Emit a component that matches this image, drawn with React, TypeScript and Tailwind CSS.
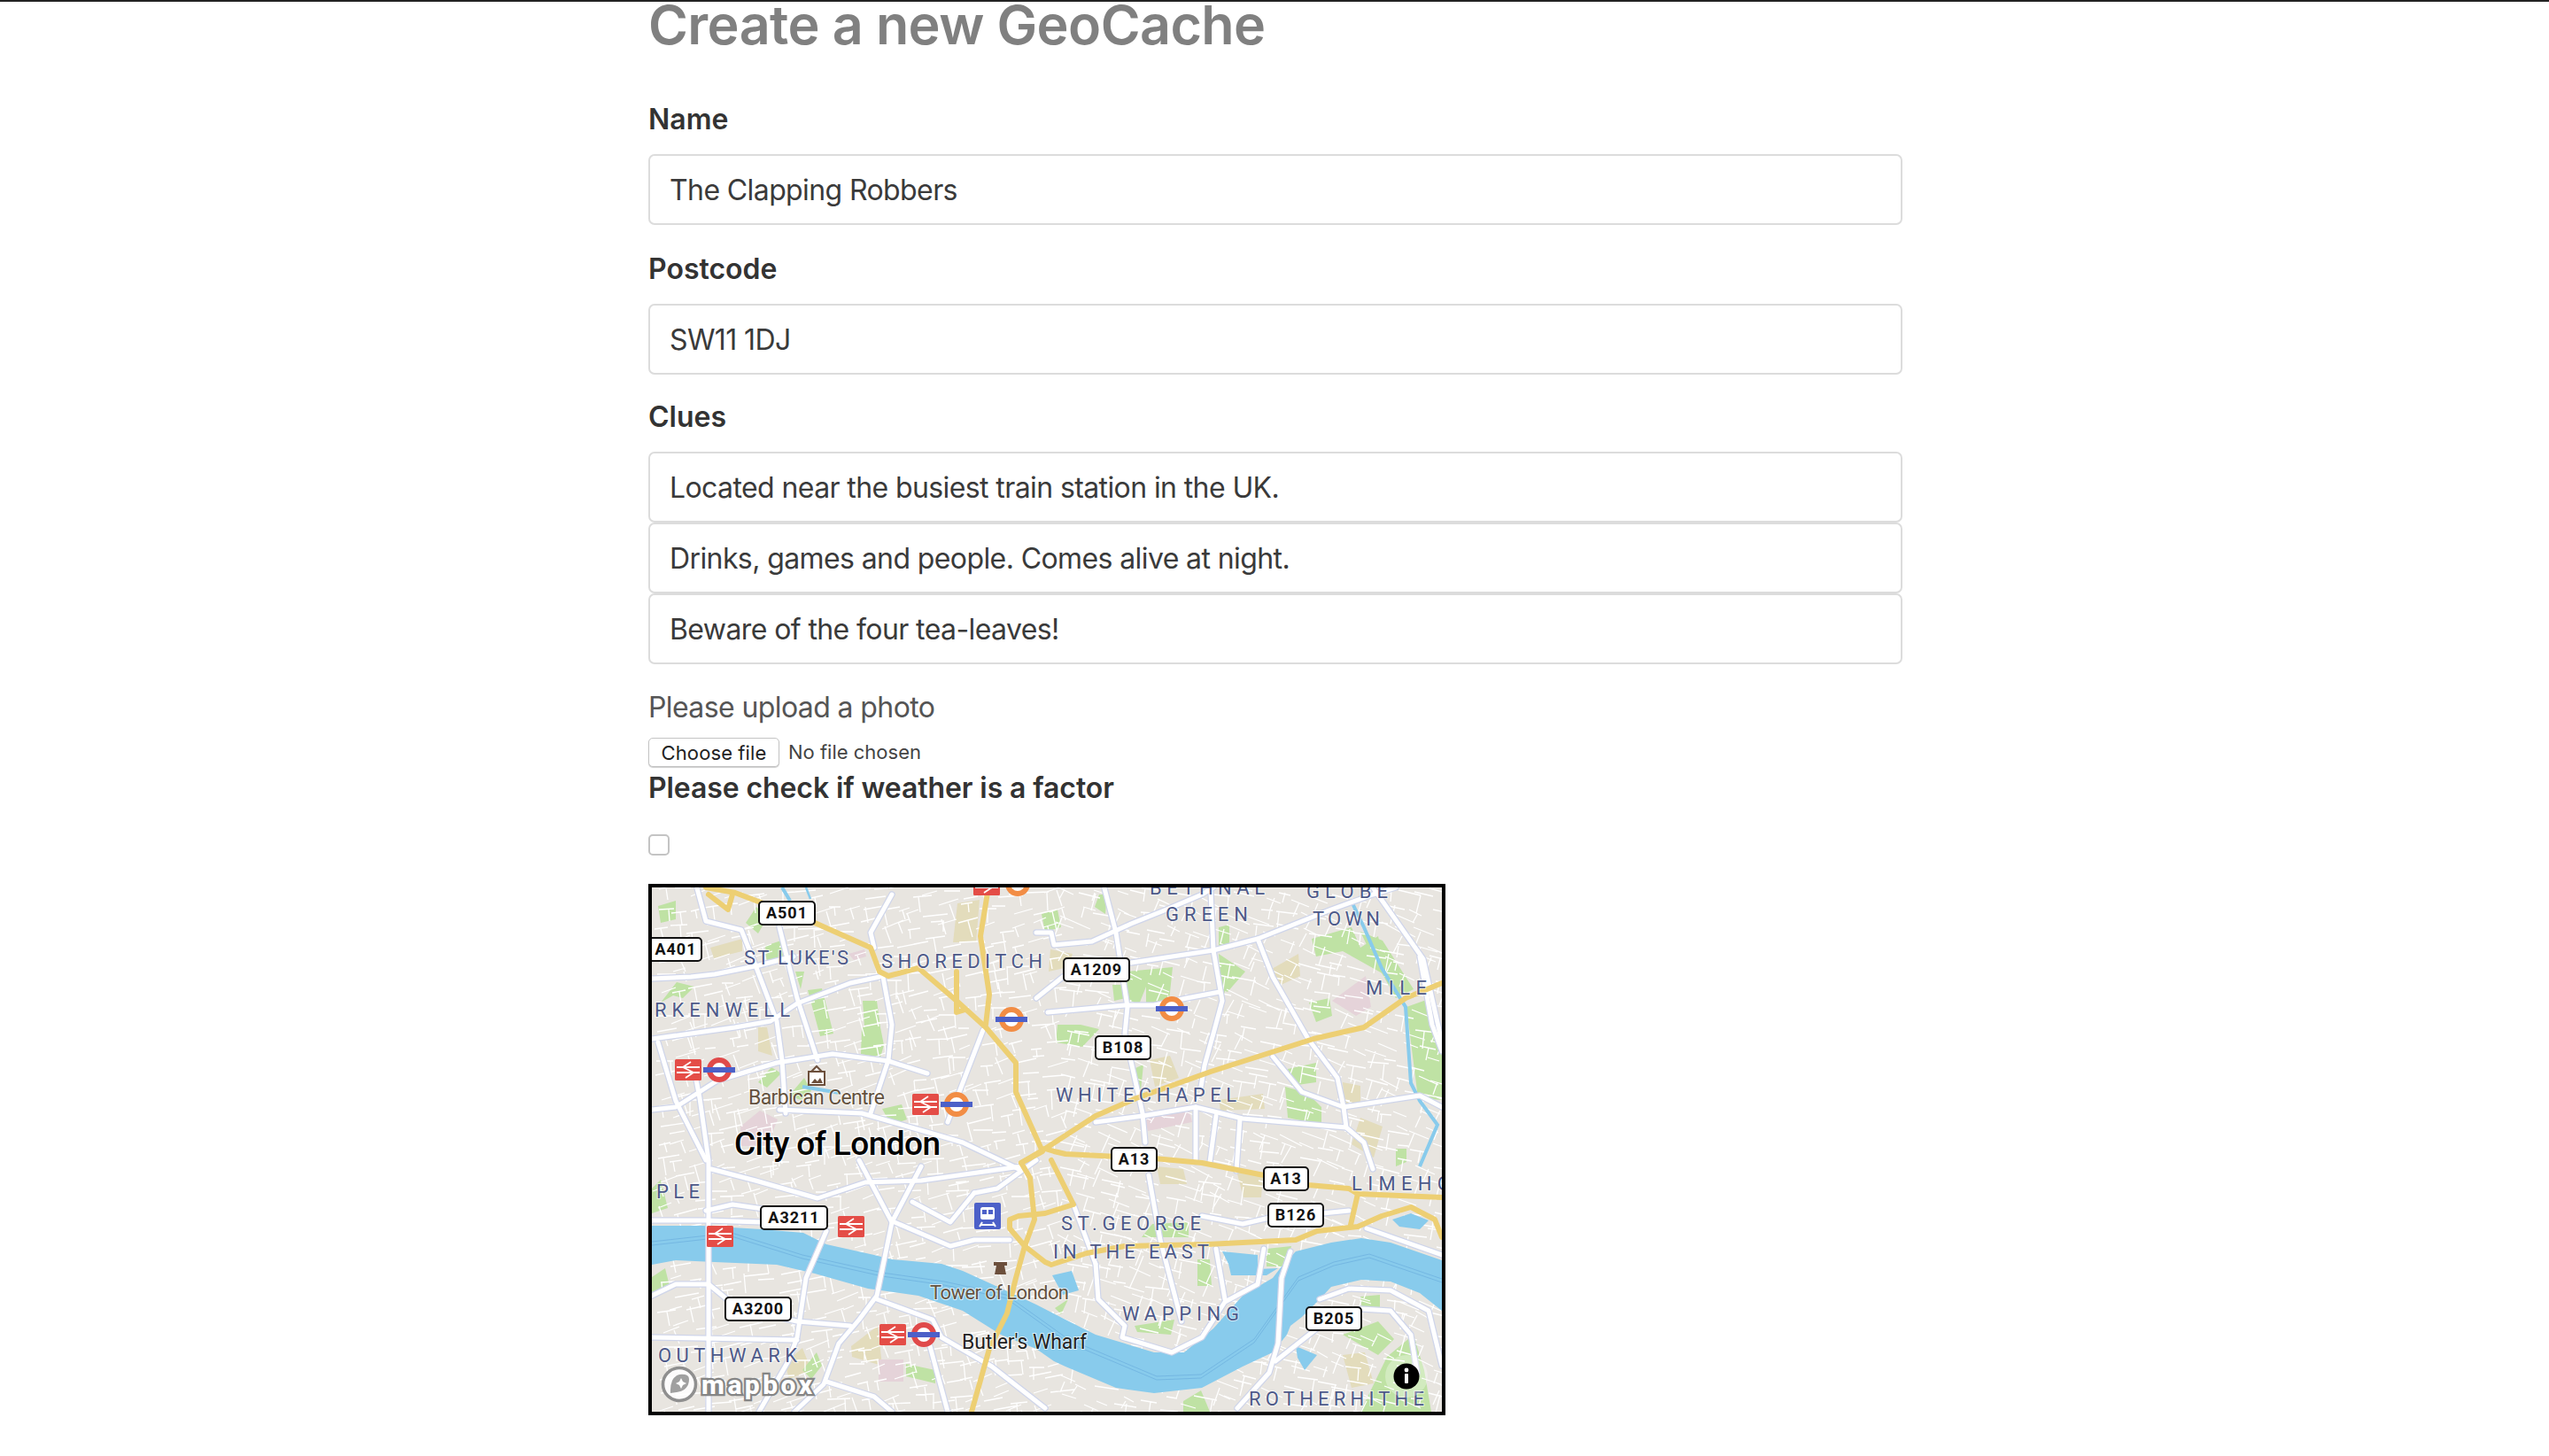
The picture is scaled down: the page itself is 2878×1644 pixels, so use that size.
import React from 'react'

type Pt = [number, number]
const line = (pts: Pt[]) => 'M' + pts.map((p) => p.join(' ')).join(' L')

const YELLOW: Pt[][] = [
  [[61, 0], [94, 6], [184, 40], [247, 68], [257, 95], [267, 100], [301, 91], [344, 128], [377, 158], [411, 198], [411, 231], [441, 298], [417, 311], [427, 328], [432, 375], [421, 405], [411, 441], [401, 481], [381, 521], [361, 592]],
  [[91, 8], [86, 25], [64, 8]],
  [[380, 0], [371, 55], [381, 121], [377, 155]],
  [[344, 95], [344, 141], [354, 138]],
  [[417, 311], [444, 295], [501, 258], [547, 238], [631, 208], [747, 171], [804, 158], [851, 125], [892, 108]],
  [[444, 295], [454, 298], [467, 301], [567, 306], [621, 311], [691, 325], [741, 336], [787, 340], [797, 346], [892, 350]],
  [[451, 308], [476, 358], [444, 368], [414, 371], [404, 375], [404, 385], [421, 405], [444, 423], [451, 426], [491, 413], [534, 405], [627, 403], [727, 398], [751, 388], [797, 383], [824, 371], [857, 361], [884, 375], [892, 395]],
  [[797, 346], [789, 381]],
]

const MAIN: Pt[][] = [
  [[0, 171], [94, 158], [134, 151], [164, 131], [224, 108], [257, 101]],
  [[0, 103], [44, 101], [71, 98], [121, 88], [160, 78]],
  [[51, 1], [61, 38], [101, 48], [117, 88], [141, 151], [147, 195], [151, 255]],
  [[144, 45], [164, 125], [187, 195]],
  [[271, 8], [247, 51], [251, 68]],
  [[261, 101], [271, 155], [267, 195], [247, 255]],
  [[374, 161], [357, 205], [334, 265]],
  [[0, 251], [27, 248], [74, 218], [141, 198], [204, 188], [267, 196], [311, 210]],
  [[144, 251], [237, 255], [317, 278], [351, 288], [414, 318]],
  [[7, 175], [27, 241], [61, 308]],
  [[47, 201], [54, 238], [64, 308], [64, 592]],
  [[0, 376], [61, 376], [124, 378]],
  [[61, 365], [91, 358], [140, 365]],
  [[67, 318], [117, 331], [187, 351], [241, 333], [304, 331], [417, 315]],
  [[234, 308], [271, 378]],
  [[304, 315], [271, 378], [254, 461], [234, 488], [211, 515], [194, 561], [161, 592]],
  [[197, 388], [174, 441], [164, 508], [154, 535], [121, 592]],
  [[274, 378], [337, 405], [364, 398], [404, 398]],
  [[294, 355], [337, 378], [364, 345]],
  [[0, 461], [27, 448], [64, 448], [97, 475], [164, 490], [224, 495]],
  [[0, 508], [164, 511]],
  [[254, 465], [317, 488], [327, 508], [384, 541], [444, 588]],
  [[314, 518], [334, 592]],
  [[197, 558], [251, 575], [271, 592]],
  [[511, 1], [524, 51], [537, 135], [534, 165], [554, 255], [557, 288]],
  [[434, 51], [451, 51], [454, 65], [497, 61], [541, 41], [581, 25], [621, 8], [634, 0]],
  [[541, 85], [634, 71], [684, 58], [767, 25], [814, 8], [840, 0]],
  [[434, 125], [464, 101]],
  [[447, 141], [534, 133], [567, 133], [604, 125], [641, 118]],
  [[631, 5], [634, 71], [644, 128], [634, 165], [624, 201], [620, 225]],
  [[684, 58], [701, 101], [741, 171], [774, 215], [781, 248], [784, 271], [804, 288], [814, 318]],
  [[701, 191], [734, 231], [781, 248], [867, 235], [892, 248]],
  [[501, 265], [554, 258], [614, 248], [667, 261], [784, 271]],
  [[614, 248], [614, 310]],
  [[637, 258], [630, 310]],
  [[664, 261], [660, 320]],
  [[814, 0], [871, 81], [892, 175]],
  [[867, 78], [881, 155], [892, 185]],
  [[754, 465], [787, 453], [834, 455], [877, 478], [892, 540]],
  [[801, 476], [834, 478], [857, 505], [864, 548]],
  [[704, 535], [751, 498]],
  [[721, 411], [711, 441], [707, 515], [697, 548], [661, 588]],
  [[501, 425], [504, 465], [534, 495], [531, 508], [587, 525], [621, 508], [647, 468], [684, 448], [691, 408]],
  [[637, 408], [647, 465]],
  [[561, 325], [574, 398], [598, 490]],
  [[807, 385], [892, 415]],
  [[621, 371], [667, 380], [697, 373]],
  [[757, 368], [787, 365]],
  [[434, 308], [390, 340], [364, 345]],
  [[476, 358], [501, 425]],
]

const RIVER: Pt[] = [[0, 382], [57, 382], [124, 386], [171, 390], [197, 403], [251, 415], [271, 420], [327, 425], [351, 433], [384, 448], [421, 465], [434, 471], [467, 488], [501, 505], [567, 525], [601, 525], [634, 498], [667, 461], [701, 441], [711, 428], [727, 411], [767, 401], [801, 396], [834, 401], [892, 421], [892, 478], [867, 458], [834, 445], [801, 443], [767, 451], [754, 465], [734, 485], [721, 495], [717, 505], [701, 525], [667, 541], [621, 565], [567, 571], [524, 565], [467, 541], [454, 535], [434, 521], [394, 505], [351, 478], [301, 461], [244, 453], [184, 436], [141, 426], [71, 423], [27, 421], [0, 426]]

const DOCKS: Pt[][] = [
  [[836, 375], [857, 368], [877, 376], [867, 386], [844, 383]],
  [[644, 411], [684, 415], [684, 431], [707, 430], [694, 438], [654, 438], [651, 425]],
  [[727, 518], [751, 528], [737, 545], [729, 531]],
  [[452, 438], [474, 433], [482, 455], [464, 460]],
]

const PARKS: Pt[][] = [
  [[7, 21], [27, 15], [27, 36], [10, 40]],
  [[106, 40], [118, 22], [130, 35], [120, 52]],
  [[128, 66], [146, 60], [150, 82], [130, 88]],
  [[10, 130], [28, 107], [48, 112], [35, 125], [24, 122]],
  [[176, 116], [192, 114], [205, 165], [190, 168]],
  [[162, 95], [172, 95], [168, 115]],
  [[238, 128], [254, 128], [258, 158], [240, 158]],
  [[237, 158], [258, 158], [262, 178], [258, 192], [236, 188]],
  [[155, 235], [172, 215], [180, 230], [168, 240]],
  [[260, 250], [282, 245], [288, 262], [270, 268]],
  [[120, 220], [135, 203], [146, 210], [130, 226]],
  [[0, 340], [10, 330], [18, 362], [0, 368]],
  [[0, 440], [15, 430], [20, 450], [0, 462]],
  [[170, 545], [186, 525], [192, 540], [180, 555]],
  [[287, 538], [320, 545], [320, 560], [287, 552]],
  [[505, 8], [514, 8], [512, 30], [500, 22]],
  [[440, 30], [458, 25], [462, 45], [444, 50]],
  [[536, 95], [588, 90], [584, 128], [558, 135], [558, 112], [550, 132], [536, 130]],
  [[640, 75], [670, 95], [650, 118], [643, 115]],
  [[640, 45], [652, 42], [652, 65], [640, 68]],
  [[745, 58], [790, 45], [800, 68], [820, 55], [830, 100], [780, 72], [750, 78]],
  [[800, 50], [825, 60], [860, 115], [840, 125], [812, 75]],
  [[852, 135], [880, 125], [892, 190], [892, 240], [865, 238]],
  [[742, 130], [765, 125], [768, 145], [750, 152]],
  [[484, 155], [505, 160], [486, 180], [456, 175], [458, 155]],
  [[520, 110], [534, 110], [535, 125], [522, 128]],
  [[546, 204], [555, 200], [552, 230], [546, 232]],
  [[718, 205], [750, 198], [750, 220], [722, 224]],
  [[715, 225], [740, 232], [756, 248], [756, 268], [718, 260]],
  [[640, 100], [650, 100], [645, 128]],
  [[840, 295], [852, 295], [852, 310], [840, 315]],
  [[553, 395], [565, 380], [606, 378], [606, 395]],
  [[616, 420], [630, 420], [632, 450], [616, 450]],
  [[694, 408], [722, 405], [716, 428], [694, 428]],
  [[545, 495], [590, 488], [586, 505], [548, 502]],
  [[800, 462], [822, 460], [822, 478], [802, 478]],
  [[780, 505], [820, 490], [838, 510], [820, 528]],
  [[830, 530], [860, 505], [872, 545], [880, 592], [800, 592]],
  [[600, 580], [620, 568], [630, 592], [600, 592]],
  [[455, 475], [470, 465], [462, 482]],
]

const SAND: Pt[][] = [
  [[66, 68], [102, 58], [102, 72], [70, 80]],
  [[345, 18], [370, 14], [366, 62], [340, 62]],
  [[120, 158], [130, 158], [136, 190], [120, 185]],
  [[450, 70], [475, 75], [470, 90], [448, 95]],
  [[700, 92], [730, 75], [732, 100], [706, 112]],
  [[562, 195], [585, 190], [595, 215], [568, 225]],
  [[640, 240], [690, 233], [692, 250], [642, 252]],
  [[570, 315], [600, 318], [604, 335], [574, 335]],
  [[660, 320], [690, 326], [688, 350], [668, 350]],
  [[800, 260], [825, 270], [815, 305], [790, 290]],
  [[780, 220], [800, 224], [800, 245], [782, 248]],
  [[225, 518], [255, 495], [260, 540], [226, 530]],
  [[150, 537], [170, 520], [180, 545], [155, 555]],
  [[780, 528], [805, 525], [815, 560], [790, 565]],
]

const PINK: Pt[][] = [
  [[100, 270], [122, 252], [142, 262], [130, 292], [100, 292]],
  [[222, 75], [240, 70], [242, 78], [228, 82]],
  [[768, 128], [806, 100], [812, 135], [795, 145]],
  [[555, 255], [605, 245], [610, 265], [560, 275]],
  [[256, 533], [284, 533], [284, 558], [256, 558]],
]

// deterministic street grid, so every run draws the same map
const STREETS: string[] = []
let seed = 7
const rnd = () => {
  seed = (seed * 9301 + 49297) % 233280
  return seed / 233280
}
for (let gx = 0; gx < 892; gx += 19) {
  for (let gy = 0; gy < 592; gy += 19) {
    const a = rnd() * 0.4 - 0.2 + (gx > 450 ? 0.3 : -0.2)
    const x = gx + rnd() * 14
    const y = gy + rnd() * 14
    const len = 12 + rnd() * 16
    const c = Math.cos(a) * len
    const s = Math.sin(a) * len
    STREETS.push(`M${x.toFixed(0)} ${y.toFixed(0)} L${(x + c).toFixed(0)} ${(y + s).toFixed(0)}`)
    if (rnd() > 0.35) {
      const mx = x + c * rnd()
      const my = y + s * rnd()
      STREETS.push(`M${mx.toFixed(0)} ${my.toFixed(0)} L${(mx - s * 0.8).toFixed(0)} ${(my + c * 0.8).toFixed(0)}`)
    }
  }
}

const AREAS: [string, number, number, number][] = [
  ["ST LUKE'S", 104, 87, 118],
  ['SHOREDITCH', 259, 91, 182],
  ['RKENWELL', 3, 146, 153],
  ['BETHNAL', 562, 8, 130],
  ['GREEN', 580, 38, 93],
  ['GLOBE', 739, 12, 92],
  ['TOWN', 746, 43, 76],
  ['MILE E', 806, 121, 100],
  ['WHITECHAPEL', 456, 242, 204],
  ['PLE', 5, 351, 49],
  ['OUTHWARK', 7, 536, 157],
  ['ST.GEORGE', 462, 387, 158],
  ['IN THE EAST', 453, 419, 176],
  ['WAPPING', 531, 489, 132],
  ['ROTHERHITHE', 674, 585, 198],
  ['LIMEHO', 790, 342, 112],
]

const SHIELDS: [string, number, number, number][] = [
  ['A501', 121, 16, 63],
  ['A401', -8, 57, 64],
  ['A1209', 465, 80, 74],
  ['B108', 501, 168, 62],
  ['A13', 519, 294, 51],
  ['A13', 691, 316, 50],
  ['B126', 696, 357, 62],
  ['A3211', 123, 360, 75],
  ['A3200', 83, 463, 74],
  ['B205', 739, 474, 62],
]

const RAIL: Pt[] = [[26, 194], [294, 233], [363, -15], [62, 382], [210, 371], [257, 493]]
const TUBE: [number, number, string][] = [
  [76, 206, '#e04a4a'],
  [344, 245, '#f28d45'],
  [413, -4, '#f28d45'],
  [406, 149, '#f28d45'],
  [587, 137, '#f28d45'],
  [307, 505, '#e04a4a'],
]

function LondonMap() {
  const mapFont = { fontFamily: 'Roboto, sans-serif' }
  return (
    <svg viewBox="0 0 892 592" className="block h-full w-full" style={mapFont}>
      <rect width="892" height="592" fill="#e8e5e0" />
      {SAND.map((p, i) => <path key={i} d={line(p) + 'Z'} fill="#e3dcbc" />)}
      {PINK.map((p, i) => <path key={i} d={line(p) + 'Z'} fill="#e5d3d9" />)}
      {PARKS.map((p, i) => <path key={i} d={line(p) + 'Z'} fill="#bfe2a4" />)}
      <path d={STREETS.join(' ')} stroke="#ffffff" strokeWidth="1.3" fill="none" />

      {/* water */}
      <path d={line(RIVER) + 'Z'} fill="#88cbec" />
      {DOCKS.map((p, i) => <path key={i} d={line(p) + 'Z'} fill="#88cbec" />)}
      <g fill="none" stroke="#88cbec" strokeWidth="4">
        <path d="M791 18 L804 45 L824 91 L851 135 L857 221 L867 241 L887 268 L867 315" />
        <path d="M147 0 L156 15" />
        <path d="M174 0 L179 13" strokeWidth="2.5" />
        <path d="M170 225 L212 232" />
      </g>
      <g fill="none" stroke="#74b7e2" strokeWidth="1">
        <path d="M0 400 L90 390 L170 415 L260 435 L330 445 L400 460 L470 510 L570 552 L620 550 L680 510 L730 440 L770 423 L810 414 L892 442" />
        <path d="M0 404 L90 394 L170 419 L260 439 L330 449 L400 464 L470 514 L570 556 L620 554 L680 514 L730 444 L770 427 L810 418 L892 446" />
      </g>

      {/* roads */}
      <g fill="none" strokeLinejoin="round" strokeLinecap="round">
        {MAIN.map((p, i) => <path key={i} d={line(p)} stroke="#cfd5ea" strokeWidth="7.5" />)}
        {MAIN.map((p, i) => <path key={i} d={line(p)} stroke="#ffffff" strokeWidth="5" />)}
        {YELLOW.map((p, i) => <path key={i} d={line(p)} stroke="#edcf73" strokeWidth="6" />)}
      </g>

      {/* area labels */}
      {AREAS.map(([t, x, y, w]) => (
        <text key={t} x={x} y={y} textLength={w} fontSize="22" fill="#4d5989" stroke="#ffffff" strokeOpacity="0.6" strokeWidth="2" style={{ paintOrder: 'stroke' }}>{t}</text>
      ))}
      <g stroke="#ffffff" strokeOpacity="0.7" strokeWidth="2" style={{ paintOrder: 'stroke' }}>
        <text x="109" y="245" textLength="154" fontSize="23" fill="#64523f">Barbican Centre</text>
        <text x="314" y="465" textLength="157" fontSize="22" fill="#64523f">Tower of London</text>
        <text x="350" y="521" textLength="141" fontSize="23" fill="#222222">Butler's Wharf</text>
        <text x="93" y="302" textLength="233" fontSize="37" fontWeight="500" fill="#000000" strokeWidth="3">City of London</text>
      </g>

      {/* road shields */}
      {SHIELDS.map(([t, x, y, w], i) => (
        <g key={i}>
          <rect x={x} y={y} width={w} height="26" rx="4" fill="#ffffff" stroke="#111111" strokeWidth="2" />
          <text x={x + w / 2 + (x < 0 ? 3 : 0)} y={y + 19} textAnchor="middle" fontSize="18" fontWeight="700" letterSpacing="1" fill="#111111">{t}</text>
        </g>
      ))}

      {/* stations */}
      {RAIL.map(([x, y], i) => (
        <g key={i}>
          <rect x={x} y={y} width="30" height="24" rx="1.5" fill="#e44d47" />
          <path d={`M${x + 2} ${y + 9} H${x + 28} M${x + 2} ${y + 15} H${x + 28} M${x + 18} ${y + 3} L${x + 9} ${y + 9} M${x + 9} ${y + 9} L${x + 21} ${y + 15} M${x + 21} ${y + 15} L${x + 12} ${y + 21}`} stroke="#ffffff" strokeWidth="1.8" fill="none" />
        </g>
      ))}
      {TUBE.map(([x, y, c], i) => (
        <g key={i}>
          <circle cx={x} cy={y} r="11" fill="#ffffff" stroke={c} strokeWidth="6" />
          <rect x={x - 18} y={y - 3} width="36" height="6" fill="#4c60c8" />
        </g>
      ))}
      <rect x="364" y="356" width="30" height="30" rx="2" fill="#4c60c8" />
      <rect x="371" y="361" width="16" height="14" rx="2.5" fill="#ffffff" />
      <path d="M373 364 H378 V369 H373 Z M380 364 H385 V369 H380 Z" fill="#4c60c8" />
      <path d="M373 378 L370 383 M385 378 L388 383 M371 381 H387" stroke="#ffffff" strokeWidth="2" fill="none" />

      {/* poi icons */}
      <path d="M386 423 H401 V427 H398 L400 437 H387 L389 427 H386 Z" fill="#6c4f3c" />
      <rect x="177" y="208" width="18" height="15" fill="#ffffff" stroke="#6c4f3c" strokeWidth="2" />
      <path d="M180 208 L186 202 L192 208" fill="none" stroke="#6c4f3c" strokeWidth="2" />
      <path d="M180 221 L184 216 L187 219 L190 215 L193 221 Z" fill="#6c4f3c" />

      {/* attribution */}
      <circle cx="852" cy="552" r="24" fill="#ffffff" opacity="0.3" />
      <circle cx="852" cy="552" r="14.5" fill="#000000" />
      <circle cx="852" cy="545" r="2.4" fill="#ffffff" />
      <rect x="850" y="549" width="4" height="11" rx="1" fill="#ffffff" />
      <circle cx="31" cy="561" r="18.5" fill="#ffffff" fillOpacity="0.85" stroke="#8f8f8f" strokeWidth="3.5" />
      <path d="M21 571 Q20 553 31 550 Q42 549 42 555 Q42 568 28 570 Z" fill="#a0a0a0" />
      <path d="M33 554 L35 558 L39 560 L35 562 L33 566 L31 562 L27 560 L31 558 Z" fill="#ffffff" />
      <text x="56" y="572" textLength="125" fontSize="30" fontWeight="800" fill="#ffffff" stroke="#858585" strokeWidth="4.5" style={{ paintOrder: 'stroke' }}>mapbox</text>
    </svg>
  )
}

function Label({ children }: { children: React.ReactNode }) {
  return <label className="block h-[38px] text-[32px] leading-[38px] font-semibold text-[#333333]">{children}</label>
}

function Field({ value, className = '' }: { value: string; className?: string }) {
  return (
    <input
      readOnly
      value={value}
      className={`block h-[80px] w-full rounded-[7px] border-2 border-[#dcdcdc] bg-white px-[22px] text-[32px] tracking-[-0.6px] text-[#3a3a3a] outline-none ${className}`}
    />
  )
}

export default function App() {
  return (
    <div className="min-h-[1644px] bg-white font-['Inter',sans-serif]">
      <div className="h-[2px] bg-[#222222]" />
      <main className="ml-[732px] w-[1416px]">
        <h1 className="h-[52px] text-[61px] leading-[52px] font-semibold tracking-[-0.6px] text-[#808080]">Create a new GeoCache</h1>

        <div className="mt-[62px]"><Label>Name</Label></div>
        <Field value="The Clapping Robbers" className="mt-[20px]" />

        <div className="mt-[31px]"><Label>Postcode</Label></div>
        <Field value="SW11 1DJ" className="mt-[20px]" />

        <div className="mt-[29px]"><Label>Clues</Label></div>
        <Field value="Located near the busiest train station in the UK." className="mt-[20px]" />
        <Field value="Drinks, games and people. Comes alive at night." />
        <Field value="Beware of the four tea-leaves!" />

        <p className="mt-[30px] h-[38px] text-[32px] leading-[38px] tracking-[-0.6px] text-[#555555]">Please upload a photo</p>
        <div className="mt-[15px] flex h-[33px] items-center">
          <button className="h-[33px] w-[148px] rounded-[5px] border border-[#c4c4c4] bg-white text-[22px] leading-none tracking-[0.1px] text-[#222222] shadow-[0_1px_1px_rgba(0,0,0,0.2)]">Choose file</button>
          <span className="ml-[10px] text-[22px] text-[#444444]">No file chosen</span>
        </div>
        <p className="mt-[4px] h-[40px] text-[32px] leading-[40px] font-semibold tracking-[-0.1px] text-[#333333]">Please check if weather is a factor</p>
        <input type="checkbox" readOnly className="mt-[32px] block h-[24px] w-[24px] appearance-none rounded-[5px] border-2 border-[#c4c4c4] bg-white" />
        <div className="mt-[32px] h-[600px] w-[900px] border-4 border-black">
          <LondonMap />
        </div>
      </main>
    </div>
  )
}
